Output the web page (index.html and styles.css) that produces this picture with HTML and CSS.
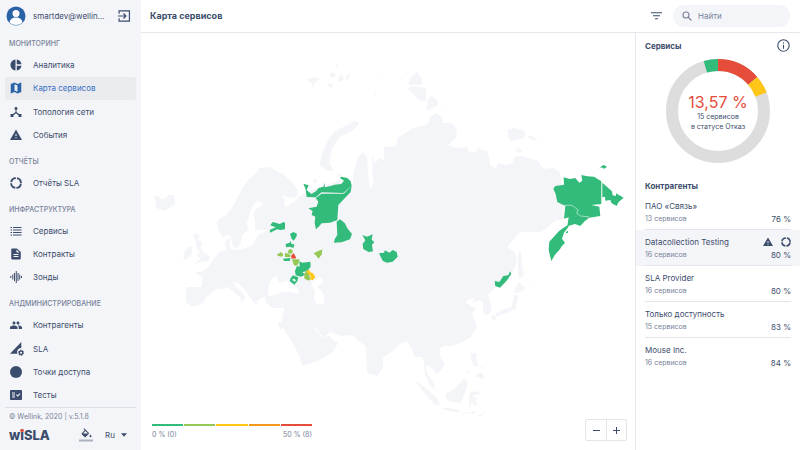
FILE: index.html
```html
<!DOCTYPE html>
<html lang="ru">

<head>
    <meta charset="utf-8">
    <title>Карта сервисов</title>
    <link rel="stylesheet" href="styles.css">
</head>

<body>
    <!-- shared icons -->
    <svg class="sprite">
        <symbol id="warning" viewBox="1 1 22 22">
            <path d="M1 21h22L12 2 1 21zm12-3h-2v-2h2v2zm0-4h-2v-4h2v4z" />
        </symbol>
        <symbol id="ring" viewBox="1 1 22 22">
            <circle cx="12" cy="12" r="9" fill="none" stroke="currentColor" stroke-width="3.4" pathLength="80" stroke-dasharray="17 3" stroke-dashoffset="-1.5" />
        </symbol>
    </svg>

    <aside class="sidebar">
        <div class="profile">
            <svg class="avatar" viewBox="0 0 40 40">
                <circle cx="20" cy="20" r="19" fill="#2a62a8" />
                <circle cx="20" cy="15" r="7" fill="#fff" />
                <path d="M7 33c1-7 6-10 13-10s12 3 13 10a19 19 0 0 1-26 0z" fill="#fff" />
            </svg>
            <span class="user">smartdev@wellin...</span>
            <a href="#" class="logout" aria-label="Выйти">
                <svg class="icon" viewBox="1 1 22 22">
                    <path d="M3 8V2.500h19v19H3V16M1 12h14M11 7.500l4.500 4.500-4.500 4.500" fill="none" stroke="currentColor" stroke-width="2.200" />
                </svg>
            </a>
        </div>

        <nav class="nav">
            <h2 class="nav-title">МОНИТОРИНГ</h2>
            <a href="#" class="nav-item">
                <svg class="icon" viewBox="0 0 24 24"><path d="M11 1v22C5.500 22.500 1 17.800 1 12S5.500 1.500 11 1zm2.500 0v9.500H23C22.500 5.500 18.500 1.500 13.500 1zm0 12.500V23c5-.500 9-4.500 9.500-9.500z" /></svg>
                Аналитика
            </a>
            <a href="#" class="nav-item active">
                <svg class="icon" viewBox="0 0 24 24"><path d="M22 1l-7 3-6-3-7.500 3v19L9 20l6 3 7.500-3V1zM15 19.500l-6-2.300V4.500l6 2.300v12.700z" /></svg>
                Карта сервисов
            </a>
            <a href="#" class="nav-item">
                <svg class="icon" viewBox="0 0 24 24"><path d="M18 16l-5-4V7.800C14.200 7.400 15 6.300 15 5c0-1.660-1.340-3-3-3S9 3.340 9 5c0 1.300.840 2.400 2 2.800V12l-5 4H1v6h6v-3.500l5-4.200 5 4.200V22h6v-6h-5z" /></svg>
                Топология сети
            </a>
            <a href="#" class="nav-item">
                <svg class="icon"><use href="#warning" /></svg>
                События
            </a>

            <h2 class="nav-title">ОТЧЁТЫ</h2>
            <a href="#" class="nav-item">
                <svg class="icon"><use href="#ring" /></svg>
                Отчёты SLA
            </a>

            <h2 class="nav-title">ИНФРАСТРУКТУРА</h2>
            <a href="#" class="nav-item">
                <svg class="icon" viewBox="0 0 24 24"><path d="M1 4h3v2H1zM6 4h17v2H6zM1 9h3v2H1zM6 9h17v2H6zM1 14h3v2H1zM6 14h17v2H6zM1 19h3v2H1zM6 19h17v2H6z" /></svg>
                Сервисы
            </a>
            <a href="#" class="nav-item">
                <svg class="icon" viewBox="0 0 24 24"><path d="M14 1H5C3.500 1 2.500 2 2.500 3v18c0 1 1 2 2.500 2h14c1.500 0 2.500-1 2.500-2V8l-7.500-7zm3 17H7v-2h10v2zm0-4H7v-2h10v2zm-4-5V3l6 6h-6z" /></svg>
                Контракты
            </a>
            <a href="#" class="nav-item">
                <svg class="icon" viewBox="0 0 24 24"><path d="M1.500 10v4M5.500 7v10M9 4v16M12.500 0v24M16 4v16M19.500 7v10M23 10v4" stroke="currentColor" stroke-width="2" /></svg>
                Зонды
            </a>

            <h2 class="nav-title">АНДМИНИСТРИРОВАНИЕ</h2>
            <a href="#" class="nav-item">
                <svg class="icon" viewBox="0 0 24 24"><path d="M16 11c1.660 0 3-1.340 3-3s-1.340-3-3-3-3 1.340-3 3 1.340 3 3 3zm-8 0c1.660 0 3-1.340 3-3S9.660 5 8 5 5 6.340 5 8s1.340 3 3 3zm0 2c-2.500 0-8 1.170-8 3.500V20h15v-3.500c0-2.330-4.670-3.500-7-3.500zm8.500 0c-.300 0-.600.020-1 .050 1.200.840 2 1.970 2 3.450V20H24v-3.500c0-2.330-5-3.500-7.500-3.500z" /></svg>
                Контрагенты
            </a>
            <a href="#" class="nav-item">
                <svg class="icon icon-wide" viewBox="0 0 26 26">
                    <path d="M0 22L21 0v11c-5 0-8 4-8 8l1 3z" />
                    <circle cx="20.500" cy="20" r="3.300" fill="none" stroke="currentColor" stroke-width="2.600" />
                    <circle cx="20.500" cy="20" r="5" fill="none" stroke="currentColor" stroke-width="1.600" stroke-dasharray="2.600 2.600" />
                </svg>
                SLA
            </a>
            <a href="#" class="nav-item">
                <svg class="icon" viewBox="0 0 24 24"><circle cx="12" cy="12" r="12" /></svg>
                Точки доступа
            </a>
            <a href="#" class="nav-item">
                <svg class="icon" viewBox="0 0 24 24"><path d="M22 2H2C1 2 0 3 0 4v16c0 1 1 2 2 2h20c1 0 2-1 2-2V4c0-1-1-2-2-2zM10 17H4v-2h6v2zm0-4H4v-2h6v2zm0-4H4V7h6v2zm5.500 6.500L12 12l1.500-1.500 2 2L19.500 8.500 21 10z" /></svg>
                Тесты
            </a>
        </nav>

        <footer class="side-footer">
            <p class="copyright">© Wellink, 2020 | v.5.1.8</p>
            <div class="brand-row">
                <strong class="logo">wiSLA</strong>
                <button class="theme" aria-label="Цвет темы">
                    <svg viewBox="0 0 28 28">
                        <path d="M19.500 9.500L10.500.500 9 2l2.500 2.500-6 6c-.700.700-.700 1.600 0 2.200l5.500 5.500c.700.700 1.700.700 2.300 0l6.200-6.200c.600-.600.600-1.600 0-2.500zM8 11l5-5 5 5zM23 13s-2 2.200-2 3.500a2 2 0 0 0 4 0c0-1.300-2-3.500-2-3.500z" />
                        <path d="M0 23h28v4H0z" fill="#a9b1c1" />
                    </svg>
                </button>
                <div class="lang">
                    <select aria-label="Язык">
                        <option>Ru</option>
                        <option>En</option>
                    </select>
                    <svg viewBox="0 0 10 6"><path d="M0 0h10L5 6z" /></svg>
                </div>
            </div>
        </footer>
    </aside>

    <div class="page">
        <header class="header">
            <h1>Карта сервисов</h1>
            <button class="filter" aria-label="Фильтр">
                <svg viewBox="0 0 22 16"><path d="M0 1.500h22M4 7.500h14M8 13.500h6" stroke="currentColor" stroke-width="2.400" /></svg>
            </button>
            <label class="search">
                <svg viewBox="0 0 20 20"><path d="M13 13l6 6M8 2a6 6 0 1 0 0 12A6 6 0 0 0 8 2z" fill="none" stroke="currentColor" stroke-width="2.200" /></svg>
                <input type="search" placeholder="Найти" aria-label="Найти">
            </label>
        </header>

        <div class="content">
            <main class="map-area">
                <svg class="map" viewBox="141 33 494 417" preserveAspectRatio="xMidYMid meet">
                    <!-- Eurasia -->
                    <path class="land" d="M217 222L220 218 226 215 232 208 236 200 243 187 249 179 257 172 259 168 271 167 276 171 283 174 293 183 298 191 297 197 291 198 282 195 285 200 284 205 287 207 291 203 294 202 300 196 306 192 340 180 353 184 353 175 358 157 363 152 367 157 368 173 370 190 373 183 372 155 375 163 380 158 384 160 384 147 396 146 397 138 413 128 428 124 430 117 436 113 442 117 443 123 452 123 457 130 456 138 448 145 457 148 467 147 469 152 476 152 478 148 488 152 490 165 496 169 498 163 507 165 513 163 514 157 520 156 537 160 543 169 553 168 560 172 562 190 564 219 555 221 547 228 540 232 520 232 507 247 515 252 517 262 512 273 503 283 495 288 488 295 492 310 488 315 483 313 483 303 480 300 472 303 475 297 465 302 472 307 476 308 472 314 477 327 470 338 460 343 448 347 446 345 440 348 440 355 445 365 437 374 432 368 426 365 427 373 432 380 436 389 429 384 425 375 424 363 422 357 415 357 412 350 407 341 400 344 392 352 383 357 383 368 377 376 373 368 367 352 367 346 367 345 372 372 366 359 367 347 360 342 353 335 340 336 330 332 325 337 319 333 315 326 315 330 322 337 329 336 332 339 338 343 333 352 320 360 309 364 302 366 299 355 292 342 283 328 280 330 278 323 282 321 284 308 272 308 266 302 265 297 261 298 257 301 257 306 252 300 248 295 243 288 238 283 233 282 237 288 242 292 247 300 244 299 242 304 240 297 235 293 228 287 222 289 216 289 213 292 206 297 203 303 193 307 186 302 186 287 202 287 202 277 195 273 203 271 208 267 214 258 220 252 226 250 225 242 230 237 230 249 240 250 253 245 258 235 268 230 255 230 255 221 253 213 257 208 263 205 262 202 257 201 252 207 247 223 248 230 242 235 241 243 237 248 233 247 230 235 222 237 218 229z" />
                    <path class="land" d="M365 344L372 348 370 360 367 362zM366 345L367 373 374 375 377 376 383 368 380 342z" />
                    <path class="water" d="M268 292L269 286 272 278 277 276 278 281 282 283 287 280 291 284 297 288 299 291 298 294 289 292 282 292 276 295 268 296zM313 281L320 277 323 279 322 283 317 287 321 290 324 296 324 304 317 304 314 299 315 291 312 285z" />

                    <!-- islands -->
                    <g class="land" transform="translate(140 60) scale(.3333)">
                        <path d="M40 410l16-2 4 10 18-4 6-8 18-2 5 28-15 9-18 12-25-9 0-9-8-7 9-3zM538 315L550 270 570 230 582 216 620 196 646 182 658 191 640 210 600 230 576 265 568 312 582 332 562 332zM586 336l16 8 6 9-14-5z" />
                        <path d="M499 60l24-10 10 5 8 2-14 8-7 14-9-14zM570 42l10-6 8 12-14 6zM595 55l10-12 6 16-14 8zM617 48l13-8-3 16-8 4zM560 70l22 4-10 10zM585 10l8 2-2 10zM516 80l10-1-6 5zM518 358l12-2 2 9-10 6zM705 98l6 4-6 3z" />
                    </g>
                    <g class="land" transform="translate(140 220) scale(.3333)">
                        <path d="M158 46L170 38 180 50 174 60 188 68 182 82 190 96 210 110 206 124 192 124 164 132 182 116 170 104 180 96 168 80 168 62zM134 94l10-12 14-4-3 26-16 16-10-3 4-12z" />
                    </g>
                    <g class="land" transform="translate(360 50) scale(.3333)">
                        <path d="M146 104L150 84 170 65 185 84 185 104zM143 116L160 108 198 114 198 156 178 150 160 134zM197 182L205 144 216 138 234 154 234 166 212 178zM444 240L462 233 495 242 495 262 478 268 454 274 443 262zM503 256L515 258 534 268 524 272 506 264zM465 302l12-10 10 12-8 4zM467 286l4 6-5 3zM62 78l10 0-4 3zM135 68l9 0-3 5zM43 129l7 3-4 2zM243 178l8 2-6 2z" />
                    </g>
                    <g class="land" transform="translate(360 240) scale(.3333)">
                        <path d="M474 45L479 31 485 42 486 72 492 104 482 114 474 108zM476 126L496 144 486 154 462 160 466 144zM463 164L476 168 466 208 430 222 410 230 404 222 430 208 455 202zM395 226l14 6-5 10-8-4z" />
                        <path d="M331 340L348 339 350 362 358 380 342 378 334 362zM345 408l18-12 12 16-10 6zM318 400l12-12 0 6-10 8zM362 377l6 2-2 8zM257 460L278 450 312 416 324 426 316 456 302 488 266 484 258 474zM165 423L190 438 232 476 240 496 224 494 194 460zM326 470L332 456 364 454 360 462 338 466 342 474 354 472 346 482 352 496 342 496 336 484 332 500 326 498 328 484zM242 505l28-1 30 8-3 6-34-6zM306 517l18-1v4h-18zM330 516l20-2-10 8zM355 526l22-10-16 14zM508 126l8-4-4 6zM205 415L218 424 218 440 228 448 212 440z" />
                    </g>

                    <!-- regions: Nenets, Komi, Ural -->
                    <g class="green" transform="translate(140 60) scale(.3333)">
                        <path d="M490 371L506 376 500 390 514 402 528 394 536 384 550 380 554 368 554 382 572 378 584 374 604 372 612 362 600 354 604 350 622 354 632 364 635 378 610 399 545 397 527 412 500 411 497 388z" />
                        <path d="M527 414L545 401H611L635 378 632 396 595 435 592 480 570 488 545 490 536 500 528 508 524 490 526 470 515 465 518 453 505 445 530 440 535 425z" />
                        <path d="M590 485L600 478 615 490 622 505 636 522 630 538 605 547 582 548 584 538 592 525zM667 525L681 530 698 523 695 539 703 546 696 555 699 574 686 576 670 567 668 552 676 541z" />
                    </g>
                    <g class="green" transform="translate(360 240) scale(.3333)">
                        <path d="M57 40L72 38 75 31 88 38 98 30 110 36 113 50 98 65 80 68 68 62zM404 123L418 126 430 108 445 106 450 94 454 102 440 122 420 143 406 138z" />
                    </g>

                    <!-- regions: far east -->
                    <g class="green" transform="translate(360 50) scale(.3333)">
                        <path d="M580 416L586 408 612 404 611 382 630 387 646 384 658 398 667 392 664 375 682 379 702 380 724 394V462L694 465 718 470 721 498 688 503 674 514 661 528 645 522 622 529 626 502 612 506 616 468 592 456 587 432z" />
                        <path d="M622 526L598 542 568 575 566 600 574 633 585 614 600 598 604 590 615 578 606 566 612 548 626 530z" />
                        <path d="M727 398L756 424 758 436 768 438 768 430 791 443 776 456 770 468 755 460 751 450 736 452 735 440 727 442zM717 356l8-8 7-3 9 6-8 5-9-4zM618 546l6-4 0 6-6 2z" />
                        <path class="border" d="M612 466h24l19 14-5 10 12 8 26 3" />
                    </g>

                    <!-- regions: central part -->
                    <g transform="translate(265 210) scale(.3333)">
                        <path class="green" d="M20 40L24 36 44 42 56 36 60 38 60 58 46 60 36 58 24 64 16 68 14 60 32 52 16 46zM75 72L85 66 96 71 94 81 86 92 80 86zM62 102L74 98 77 92 79 101 89 104 85 114 75 110 63 112zM53 146l24-2-3 9-16 0z" />
                        <path class="green" d="M103 154L112 158 136 155 137 170 126 184 112 186 120 194 108 200 92 196 90 182 96 168 104 170zM77 204L84 196 100 202 97 214 88 224 74 213z" />
                        <path class="lime" d="M35 134L48 126 56 134 50 140 40 138zM60 128L70 131 77 135 75 142 60 141zM68 124L76 116 84 122 80 132 70 130zM81 148H104L100 162 93 168 86 164zM118 190L126 184 132 192 136 206 132 212 118 206zM146 130L160 123 172 118 170 134 160 146 154 137z" />
                        <path class="red" d="M78 138L86 129 91 138 94 145 80 146z" />
                        <path class="yellow" d="M124 182L132 179 136 187 144 190 151 201 144 210 136 209 137 198 128 190z" />
                        <path class="water" d="M81 209l6-3 6 5-4 4z" />
                    </g>
                </svg>

                <div class="map-tools">
                    <div class="legend">
                        <div class="scale">
                            <i class="bg-green"></i><i class="bg-lime"></i><i class="bg-yellow"></i><i class="bg-orange"></i><i class="bg-red"></i>
                        </div>
                        <div class="scale-text"><span>0 % (0)</span><span>50 % (8)</span></div>
                    </div>
                    <div class="zoom">
                        <button aria-label="Уменьшить"><svg viewBox="0 0 7 7"><path d="M0 3.500h7" /></svg></button>
                        <button aria-label="Увеличить"><svg viewBox="0 0 7 7"><path d="M0 3.500h7M3.500 0v7" /></svg></button>
                    </div>
                </div>
            </main>

            <section class="panel">
                <div class="panel-head">
                    <h2>Сервисы</h2>
                    <button class="info" aria-label="Информация">
                        <svg viewBox="0 0 24 24"><circle cx="12" cy="12" r="10.500" fill="none" stroke="currentColor" stroke-width="2" /><path d="M11 10.500h2V18h-2zM11 6h2v2.400h-2z" /></svg>
                    </button>
                </div>

                <div class="donut">
                    <svg viewBox="0 0 104 104">
                        <g fill="none" stroke-width="12" transform="rotate(-90 52 52)">
                            <circle cx="52" cy="52" r="46" stroke="#dddddd" />
                            <circle cx="52" cy="52" r="46" stroke="#e54c3a" pathLength="360" stroke-dasharray="49 311" />
                            <circle cx="52" cy="52" r="46" stroke="#fec718" pathLength="360" stroke-dasharray="20 340" stroke-dashoffset="-49" />
                            <circle cx="52" cy="52" r="46" stroke="#33bb7b" pathLength="360" stroke-dasharray="16 344" stroke-dashoffset="-344" />
                        </g>
                    </svg>
                    <div class="donut-text">
                        <strong>13,57 %</strong>
                        <span>15 сервисов<br>в статусе Отказ</span>
                    </div>
                </div>

                <h2 class="list-title">Контрагенты</h2>
                <ul class="clients">
                    <li>
                        <div class="client">
                            <a href="#">ПАО «Связь»</a>
                            <p><span>13 сервисов</span><b>76 %</b></p>
                        </div>
                    </li>
                    <li class="selected">
                        <div class="client">
                            <a href="#">Datacollection Testing
                                <svg class="icon first"><use href="#warning" /></svg>
                                <svg class="icon"><use href="#ring" /></svg>
                            </a>
                            <p><span>16 сервисов</span><b>80 %</b></p>
                        </div>
                    </li>
                    <li>
                        <div class="client">
                            <a href="#">SLA Provider</a>
                            <p><span>16 сервисов</span><b>80 %</b></p>
                        </div>
                    </li>
                    <li>
                        <div class="client">
                            <a href="#">Только доступность</a>
                            <p><span>15 сервисов</span><b>83 %</b></p>
                        </div>
                    </li>
                    <li>
                        <div class="client">
                            <a href="#">Mouse Inc.</a>
                            <p><span>16 сервисов</span><b>84 %</b></p>
                        </div>
                    </li>
                </ul>
            </section>
        </div>
    </div>
</body>

</html>
```
FILE: styles.css
```css
* {
    box-sizing: border-box;
}

body {
    margin: 0;
    display: flex;
    min-height: 100vh;
    font-family: Inter, "Noto Sans", sans-serif;
    font-size: 8px;
    line-height: 10px;
    color: #3c4c6c;
    background: #fff;
}

h1,
h2,
p,
ul {
    margin: 0;
    padding: 0;
}

a {
    color: inherit;
    text-decoration: none;
}

button,
input,
select {
    font: inherit;
    color: inherit;
    border: 0;
    padding: 0;
    background: none;
}

svg {
    display: block;
    fill: currentColor;
}

.sprite {
    position: absolute;
    width: 0;
    height: 0;
}

.icon {
    width: 12px;
    height: 12px;
    flex: none;
}

/* sidebar */

.sidebar {
    width: 141px;
    flex: none;
    display: flex;
    flex-direction: column;
    background: #f4f5f8;
}

.profile {
    display: flex;
    align-items: center;
    height: 29px;
    padding: 3px 11px 0 6px;
}

.avatar {
    width: 20px;
    height: 20px;
}

.user {
    flex: 1;
    padding-left: 7px;
}

.nav {
    flex: 1;
    display: flex;
    flex-direction: column;
    justify-content: space-between;
    padding: 0 5px;
}

.nav-title {
    height: 24px;
    padding: 10px 4px 0;
    font-size: 7px;
    line-height: 10px;
    font-weight: 500;
    color: #77829a;
}

.nav-item {
    display: flex;
    align-items: center;
    gap: 11px;
    height: 23px;
    padding: 0 5px;
    border-radius: 3px;
}

.icon-wide {
    width: 14px;
    height: 14px;
    margin-right: -2px;
}

.active {
    color: #3b70c4;
    background: #e9ebef;
}

.active .icon {
    color: #2a62a8;
}

.side-footer {
    height: 43px;
    margin: 0 5px;
    padding: 4px 4px 0;
    border-top: 1px solid #dcdfe5;
}

.copyright {
    font-size: 7px;
    color: #77829a;
}

.brand-row {
    display: flex;
    align-items: center;
    margin-top: 4px;
    height: 18px;
}

.logo {
    position: relative;
    width: 70px;
    font-size: 13px;
    line-height: 18px;
    font-weight: 800;
}

/* red dot of the "i" */
.logo::after {
    content: "";
    position: absolute;
    left: 11px;
    top: 3px;
    width: 4px;
    height: 3px;
    border-radius: 50%;
    background: #e54c3a;
}

.theme svg {
    width: 14px;
    height: 14px;
}

.lang {
    display: flex;
    align-items: center;
    gap: 5px;
    margin-left: 12px;
}

.lang select {
    appearance: none;
    width: 11px;
}

.lang svg {
    width: 6px;
    height: 4px;
}

/* header */

.page {
    flex: 1;
    display: flex;
    flex-direction: column;
    min-width: 0;
}

.header {
    display: flex;
    align-items: center;
    height: 33px;
    padding: 0 10px 0 9px;
    border-bottom: 1px solid #e6e8ed;
}

h1 {
    flex: 1;
    font-size: 9px;
    line-height: 12px;
    font-weight: 700;
}

.filter {
    margin-right: 11px;
}

.filter svg {
    width: 11px;
    height: 8px;
}

.search {
    display: flex;
    align-items: center;
    gap: 6px;
    width: 117px;
    height: 22px;
    padding: 0 9px;
    border-radius: 11px;
    color: #77829a;
    background: #f4f5f8;
}

.search svg {
    width: 10px;
    height: 10px;
    flex: none;
}

.search input {
    flex: 1;
    min-width: 0;
}

.search input::placeholder {
    color: #77829a;
}

/* map */

.content {
    flex: 1;
    display: flex;
}

.map-area {
    position: relative;
    flex: 1;
    min-width: 0;
}

.map {
    width: 100%;
}

.land {
    fill: #f4f5f8;
}

.water {
    fill: #fff;
}

.green {
    fill: #33bb7b;
}

.lime {
    fill: #95c855;
}

.yellow {
    fill: #fec718;
}

.red {
    fill: #e54c3a;
}

.border {
    fill: none;
    stroke: #d5eee2;
    stroke-width: 2;
}

.map-tools {
    position: absolute;
    left: 0;
    right: 0;
    bottom: 9px;
    display: flex;
    justify-content: space-between;
    align-items: flex-end;
    padding: 0 8px 0 11px;
}

.legend {
    width: 160px;
    color: #77829a;
    font-size: 7px;
}

.scale {
    display: flex;
    gap: 1px;
    margin-bottom: 4px;
}

.scale i {
    flex: 1;
    height: 2px;
}

.bg-green {
    background: #33bb7b;
}

.bg-lime {
    background: #95c855;
}

.bg-yellow {
    background: #fec718;
}

.bg-orange {
    background: #f39a1e;
}

.bg-red {
    background: #e54c3a;
}

.scale-text {
    display: flex;
    justify-content: space-between;
    padding-bottom: 1px;
}

.zoom {
    display: flex;
    border: 1px solid #e2e5ea;
    border-radius: 2px;
    background: #fff;
}

.zoom button {
    display: flex;
    align-items: center;
    justify-content: center;
    width: 20px;
    height: 20px;
}

.zoom button + button {
    border-left: 1px solid #e2e5ea;
}

.zoom svg {
    width: 7px;
    height: 7px;
    stroke: currentColor;
}

/* right panel */

.panel {
    width: 165px;
    flex: none;
    border-left: 1px solid #e6e8ed;
}

.panel h2 {
    font-size: 8px;
    line-height: 10px;
    font-weight: 700;
}

.panel-head {
    display: flex;
    justify-content: space-between;
    align-items: center;
    padding: 6px 10px 0 9px;
}

.info svg {
    width: 13px;
    height: 13px;
}

.donut {
    position: relative;
    width: 104px;
    margin: 7px auto 0;
}

.donut-text {
    position: absolute;
    inset: 0;
    display: flex;
    flex-direction: column;
    align-items: center;
    justify-content: center;
    padding-top: 2px;
    text-align: center;
    font-size: 7px;
}

.donut-text strong {
    font-size: 16px;
    line-height: 20px;
    font-weight: 400;
    color: #e54c3a;
}

.panel .list-title {
    margin: 18px 9px 0;
}

.clients {
    list-style: none;
    padding-top: 3px;
}

.client {
    height: 36px;
    margin: 0 9px;
    padding-top: 6px;
    border-bottom: 1px solid #e2e5ea;
}

.clients li:last-child .client {
    border-bottom: 0;
}

.selected {
    background: #f4f5f8;
}

.client a {
    display: flex;
    align-items: center;
    height: 12px;
}

.client .icon {
    width: 10px;
    height: 10px;
}

.client .first {
    margin-left: auto;
    margin-right: 8px;
}

.client p {
    display: flex;
    justify-content: space-between;
    align-items: center;
    height: 14px;
}

.client span {
    font-size: 7px;
    color: #77829a;
}

.client b {
    font-weight: 400;
}
```
